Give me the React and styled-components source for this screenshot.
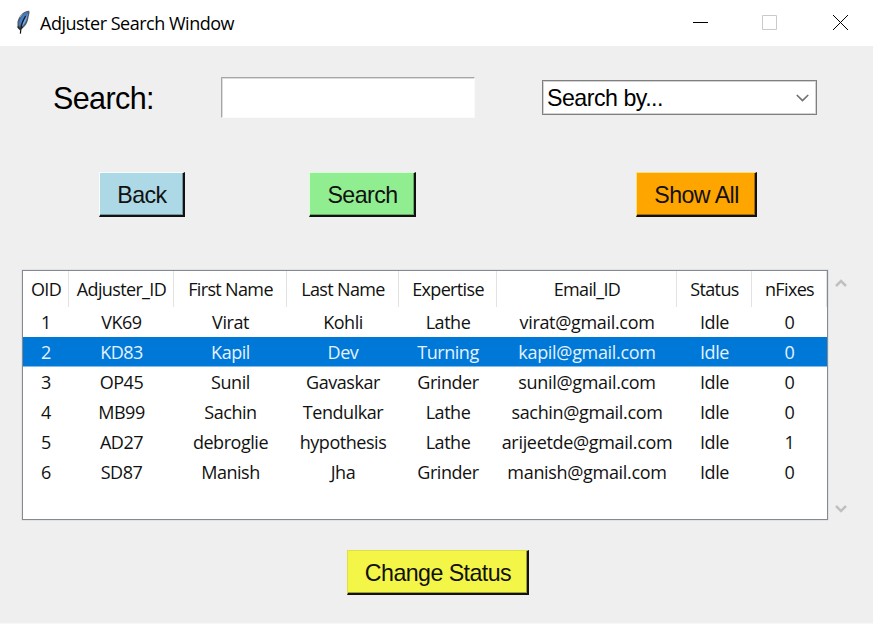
import React from "react";
import styled, { createGlobalStyle } from "styled-components";

const GlobalStyle = createGlobalStyle`
  * { box-sizing: border-box; }
  body { margin: 0; background: #efefef; }
`;

const Window = styled.div`
  width: 873px;
  height: 624px;
  display: flex;
  flex-direction: column;
  background: #efefef;
  border-bottom: 1px solid #f7f7f7;
  font-family: "Liberation Sans", Arial, sans-serif;
  color: #000;
  overflow: hidden;
`;

const TitleBar = styled.header`
  height: 46px;
  flex: none;
  display: flex;
  align-items: center;
  padding-left: 15px;
  background: #fff;
`;

const Title = styled.h1`
  flex: 1;
  margin: 0 0 0 9px;
  font: 400 18px/46px "Open Sans", "Segoe UI", sans-serif;
  letter-spacing: -0.49px;
  white-space: nowrap;
`;

const WindowControls = styled.div`
  display: flex;
  gap: 54px;
  padding-right: 25px;
`;

const ControlIcon = styled.svg`
  width: 16px;
  height: 16px;
  display: block;
  fill: none;
`;

const SearchRow = styled.div`
  height: 41px;
  margin: 31px 0 0 53px;
  flex: none;
  display: flex;
  align-items: center;
`;

const Label = styled.label`
  width: 168px;
  padding-top: 1px;
  font-size: 30.5px;
  line-height: 41px;
  letter-spacing: -0.6px;
`;

const Entry = styled.input`
  width: 254px;
  height: 41px;
  padding: 0 6px;
  border: 1px solid;
  border-color: #a6a6a6 #fafafa #fafafa #a6a6a6;
  box-shadow: inset 1px 1px 0 #dcdcdc;
  background: #fff;
  font: 22.5px "Liberation Sans", Arial, sans-serif;
  outline: none;
`;

const Combo = styled.div`
  width: 275px;
  height: 35px;
  margin-left: 67px;
  padding: 0 7px 0 4px;
  display: flex;
  align-items: center;
  justify-content: space-between;
  border: 1px solid #7f7f7f;
  box-shadow: inset 0 0 0 1px #d2d2d2;
  background: #fff;
  font-size: 23.2px;
  line-height: 34px;
  letter-spacing: -0.5px;
`;

const Chevron = styled.svg`
  width: ${(p) => p.$width}px;
  height: 8px;
  display: block;
  fill: none;
  stroke: ${(p) => p.$color};
  stroke-width: ${(p) => p.$weight};
`;

const ButtonRow = styled.div`
  height: 45px;
  margin-top: 54px;
  flex: none;
  display: flex;
  padding-left: 99px;
`;

const Button = styled.button`
  width: ${(p) => p.$width}px;
  height: 45px;
  margin: 0 0 0 ${(p) => p.$gap || 0}px;
  padding: 1px 0 0 1px;
  border: solid;
  border-width: 1px 2px 2px 1px;
  border-color: ${(p) => p.$light} #111 #111 ${(p) => p.$light};
  box-shadow: inset -1px -1px 0 ${(p) => p.$shade};
  background: ${(p) => p.$face};
  color: #111;
  font: 23.2px/40px "Liberation Sans", Arial, sans-serif;
  letter-spacing: -0.55px;
  white-space: nowrap;
`;

const TableArea = styled.div`
  height: 251px;
  margin: 53px 0 0 22px;
  flex: none;
  display: flex;
`;

const Table = styled.div`
  width: 806px;
  height: 250px;
  border: 1px solid #858991;
  box-shadow: 0 0 0 0.5px #d4d5d8;
  background: #fff;
  font: 18px/30px "Open Sans", "Segoe UI", sans-serif;
`;

const Row = styled.div`
  height: ${(p) => (p.$head ? 36 : 30)}px;
  display: grid;
  grid-template-columns: 46px 105px 113px 112px 98px 180px 75px 75px;
  text-align: center;
  white-space: nowrap;
  color: ${(p) => (p.$selected ? "#e4f2ff" : "#111")};
  background: ${(p) => (p.$selected ? "#0078d7" : "#fff")};
  border-bottom: ${(p) => (p.$selected ? "1px solid #80bbeb" : "0")};
`;

const HeadCell = styled.div`
  height: 36px;
  padding-left: 1px;
  line-height: 36px;
  letter-spacing: -0.65px;
  border-right: 1px solid #e3e3e3;
`;

const Cell = styled.div`
  min-width: 0;
  display: flex;
  justify-content: center;
  letter-spacing: ${(p) => p.$track}px;
`;

const Scrollbar = styled.div`
  width: 26px;
  display: flex;
  flex-direction: column;
  justify-content: space-between;
  align-items: center;
  padding: 9px 0 8px;
`;

const Footer = styled.div`
  display: flex;
  margin-top: 29px;
  padding-left: 347px;
`;

const columns = ["OID", "Adjuster_ID", "First Name", "Last Name", "Expertise", "Email_ID", "Status", "nFixes"];
const tracking = [-0.5, -0.5, -0.45, -0.45, -0.45, -0.32, -0.4, -0.5];

const adjusters = [
  ["1", "VK69", "Virat", "Kohli", "Lathe", "virat@gmail.com", "Idle", "0"],
  ["2", "KD83", "Kapil", "Dev", "Turning", "kapil@gmail.com", "Idle", "0"],
  ["3", "OP45", "Sunil", "Gavaskar", "Grinder", "sunil@gmail.com", "Idle", "0"],
  ["4", "MB99", "Sachin", "Tendulkar", "Lathe", "sachin@gmail.com", "Idle", "0"],
  ["5", "AD27", "debroglie", "hypothesis", "Lathe", "arijeetde@gmail.com", "Idle", "1"],
  ["6", "SD87", "Manish", "Jha", "Grinder", "manish@gmail.com", "Idle", "0"],
];

const FeatherIcon = styled.svg`
  width: 16px;
  height: 26px;
  display: block;
`;

function Feather() {
  return (
    <FeatherIcon viewBox="0 0 16 26">
      <path d="M14.2 .8 C10 .4 5.5 4 3.2 9.5 C1.4 14 1.8 18 4.2 19.4 C8.4 19 12.4 14 13.2 9 C13.6 6 15.2 3 14.2 .8Z" fill="#515b66" />
      <path d="M12.8 1.8 C9 2.4 5.4 7.5 4.2 12.5 L4 16.4 C8.2 12.4 11 7 12.8 1.8Z" fill="#3f7fcc" />
      <path d="M13.2 2.8 C13 5 12 6.5 11.7 9 C10.6 12.2 8.6 15.4 5.8 17.4 C7.5 13 10.8 8 13.2 2.8Z" fill="#74a9e6" />
      <path d="M2.6 11.5 L2.4 16.8 M7.6 3.6 L5 7.4" stroke="#a4a9ad" />
      <path d="M10.6 6 C8 10.5 5.9 14 5.4 23.6" stroke="#111820" strokeWidth="1.2" fill="none" />
      <path d="M2.8 16.5 L5.2 19.5 L7.8 17" stroke="#222a32" strokeWidth="1.4" fill="none" />
    </FeatherIcon>
  );
}

export default function App() {
  return (
    <Window>
      <GlobalStyle />
      <TitleBar>
        <Feather />
        <Title>Adjuster Search Window</Title>
        <WindowControls>
          <ControlIcon viewBox="0 0 16 16" stroke="#000"><path d="M1 7.5H16" /></ControlIcon>
          <ControlIcon viewBox="0 0 16 16" stroke="#cacaca"><path d="M.5 .5H14.5V14.5H.5Z" /></ControlIcon>
          <ControlIcon viewBox="0 0 16 16" stroke="#000"><path d="M1 0 L16 15 M16 0 L1 15" /></ControlIcon>
        </WindowControls>
      </TitleBar>

      <SearchRow>
        <Label htmlFor="query">Search:</Label>
        <Entry id="query" />
        <Combo>
          Search by...
          <Chevron viewBox="0 0 13 8" $width={13} $color="#707070" $weight={1.7}><path d="M.8 1 L6.5 6.5 L12.2 1" /></Chevron>
        </Combo>
      </SearchRow>

      <ButtonRow>
        <Button $width={86} $face="#add8e6" $light="#f4ffff" $shade="#7595a0">Back</Button>
        <Button $width={107} $gap={124} $face="#90ee90" $light="#d8ffd8" $shade="#66a866">Search</Button>
        <Button $width={121} $gap={220} $face="#ffa500" $light="#ffe07a" $shade="#a66c00">Show All</Button>
      </ButtonRow>

      <TableArea>
        <Table>
          <Row $head>
            {columns.map((name) => <HeadCell key={name}>{name}</HeadCell>)}
          </Row>
          {adjusters.map((row) => (
            <Row key={row[0]} $selected={row[0] === "2"}>
              {row.map((value, i) => <Cell key={i} $track={tracking[i]}>{value}</Cell>)}
            </Row>
          ))}
        </Table>
        <Scrollbar>
          <Chevron viewBox="0 0 12 8" $width={12} $color="#c0c0c0" $weight={2.5}><path d="M1 7 L6 2 L11 7" /></Chevron>
          <Chevron viewBox="0 0 12 8" $width={12} $color="#c0c0c0" $weight={2.5}><path d="M1 1 L6 6 L11 1" /></Chevron>
        </Scrollbar>
      </TableArea>

      <Footer>
        <Button $width={182} $face="#f3f547" $light="#dfe045" $shade="#a0a22c">Change Status</Button>
      </Footer>
    </Window>
  );
}
